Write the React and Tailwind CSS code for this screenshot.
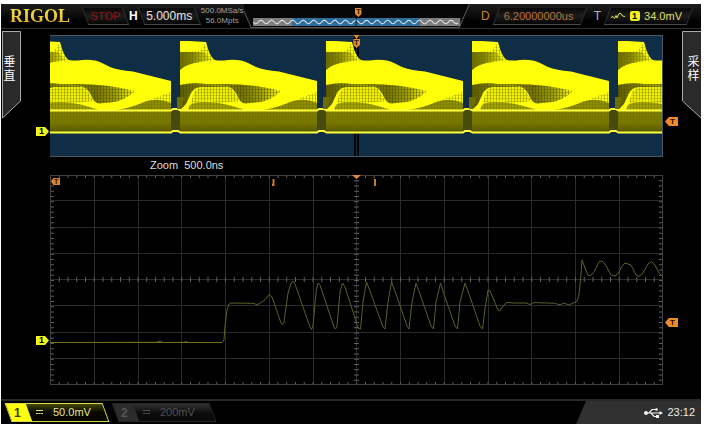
import { useState } from 'react';
import clsx from 'clsx';

const PERIOD = 146;
const bursts = [-16, 130, 276, 422, 568];

const zoomTrace =
  'M0 168.5L106 168.3L110 167L113 168.5L134 168.3L136 167.4L138 168.5H172L174 166L175 152L177 136L179 130L181 129L204 129.3L207 131L211 128.5L215 126L219 120.5L222 123L231 149L232.5 150.5L234 148L238 119L241 109L243 107L245 110L260 153L261.5 155.5L263 152L266 118L268 109L270 111L284 153L285.5 155L287 152L290 118L292.5 109L295 113L303 138L308 154L310.5 155L313 128L316.5 108L320 117L333 153L335 155L338 128L341.5 108L345 117L357 152L359 155L362 128L366 109L370 120L381 152L383.5 155L386 128L390.5 109L394 120L405 152L407.5 155L410 128L415 109L419 120L430 152L432.5 155L435 135L438 116L440 117L448 136L449.5 137L453 132L457 128.5L464 129L476 129L480 130.5L484 128.6L504 129.2L510 130.8L514 129L519 131L522 129.5L527 127.5L529 120L530.5 106L532 86L535 94L538 101L540 102L544 98L549 88L552 87L555 90L561 101L565 102L568 100L572 92L575 89L581 91L586 101L589 102.5L593 99L598 90L601.5 87.5L605 91L609 99L613 103';

const memoryWave = Array.from({ length: 103 }, (_, i) => {
  const x = i * 2;
  const y = 4 + Math.sin((x / 10.5) * Math.PI * 2) * 2;
  return `${i ? 'L' : 'M'}${x} ${y.toFixed(1)}`;
}).join('');

function Chip({ lean = 'right', className, children }) {
  return (
    <div className={clsx('relative flex h-[18px] items-center', className)}>
      <span
        className={clsx(
          'absolute inset-0 border border-x-[#303030] border-t-[#1c1c1c] border-b-[#484848] bg-linear-to-b from-[#080808] via-[#1d1d1d] to-[#060606]',
          lean === 'right' ? 'skew-x-[20deg]' : '-skew-x-[20deg]'
        )}
      />
      {children}
    </div>
  );
}

function TriggerPin() {
  return (
    <span className="block h-[9px] w-[7px] bg-[#e08a35] text-center text-[8px] leading-[8px] font-bold text-[#3a1a00] [clip-path:polygon(0_0,100%_0,100%_65%,50%_100%,0_65%)]">
      T
    </span>
  );
}

function ChannelFlag({ className }) {
  return (
    <span
      className={clsx(
        'block h-[9px] w-[13px] bg-[#f5f51e] pl-[3px] text-[9px] leading-[9px] font-bold text-black [clip-path:polygon(0_0,70%_0,100%_50%,70%_100%,0_100%)]',
        className
      )}
    >
      1
    </span>
  );
}

function LevelFlag({ className }) {
  return (
    <span
      className={clsx(
        'block h-[9px] w-[13px] bg-[#ee8a2c] pl-[5px] text-[8px] leading-[9px] font-bold text-[#2a1000] [clip-path:polygon(30%_0,100%_0,100%_100%,30%_100%,0_50%)]',
        className
      )}
    >
      T
    </span>
  );
}

function SideTab({ side, label }) {
  const left = side === 'left';
  return (
    <button
      type="button"
      className={clsx('relative flex h-[88px] w-[19px] shrink-0 pt-6 text-white', left ? 'pl-px' : 'justify-end pr-px')}
    >
      <svg viewBox="0 0 19 88" className="absolute inset-0 size-full" aria-hidden="true">
        <path
          d={left ? 'M0 .5H18.5V70L.5 87V.5' : 'M19 .5H.5V70L19 87'}
          fill="#2a2a2a"
          stroke="#a8a8a8"
        />
      </svg>
      <span className="relative w-[13px] text-[12px] leading-[14px] break-all">{label}</span>
    </button>
  );
}

function Header() {
  return (
    <header className="flex h-[25px] items-center border-b border-[#2e2e2e] bg-linear-to-b from-[#1d1d1d] via-[#0b0b0b] to-black pr-[11px] pl-[9px] whitespace-nowrap">
      <h1 className="w-[75px] bg-linear-to-b from-[#fff04a] to-[#d8a818] bg-clip-text font-['Liberation_Serif'] text-[18px] leading-6 font-bold text-transparent">
        RIGOL
      </h1>
      <div className="flex items-center gap-[3px]">
        <Chip className="w-[41px] justify-center text-[11px] text-[#8e1515]">
          <span className="relative">STOP</span>
        </Chip>
        <span className="text-[12px] font-bold text-white">H</span>
        <Chip className="w-[57px] justify-center text-[12px] text-[#e4e4e4]">
          <span className="relative">5.000ms</span>
        </Chip>
        <div className="w-[43px] text-center text-[8px] leading-[10px] text-[#a0a0a0]">
          <p>500.0MSa/s</p>
          <p>56.0Mpts</p>
        </div>
      </div>

      {/* Memory depth bar */}
      <div className="relative h-6 flex-1">
        <svg viewBox="0 0 228 24" preserveAspectRatio="none" className="size-full" aria-hidden="true">
          <path d="M-3 0L7 23.500H214L224 0" fill="#060606" stroke="#555" />
          <g transform="translate(9 14)">
            <rect width="206" height="8" fill="#7d7d7d" />
            <rect x="39" width="127" height="8" fill="#2c6f9f" />
            <path d={memoryWave} fill="none" stroke="#e6e6e6" />
            <path d="M102.500 0V8" stroke="#123" />
          </g>
        </svg>
        <span className="absolute top-1 left-1/2 -translate-x-1/2">
          <TriggerPin />
        </span>
      </div>

      <div className="ml-2 flex items-center gap-1.5">
        <span className="text-[12px] text-[#c9803a]">D</span>
        <Chip lean="left" className="w-[88px] pl-2 text-[11px] text-[#b8713a]">
          <span className="relative">6.20000000us</span>
        </Chip>
      </div>
      <div className="ml-2.5 flex items-center gap-1.5">
        <span className="text-[12px] text-[#b4b4b4]">T</span>
        <Chip lean="left" className="w-[83px] justify-between pr-2 pl-1 text-[11px] text-[#dcdc6a]">
          <svg viewBox="0 0 14 8" className="relative h-2 w-3.5" fill="none" stroke="#e0e05c" aria-hidden="true">
            <path d="M0 5.500L2 4.500L3.500 6.500L5 3.500L6 6L8 1.500L10 1.500L11.500 4L14 4.500" />
          </svg>
          <span className="relative h-[10px] w-[10px] rounded-xs bg-[#f0f01c] text-center text-[9px] leading-[10px] font-bold text-black">
            1
          </span>
          <span className="relative">34.0mV</span>
        </Chip>
      </div>
    </header>
  );
}

function Overview() {
  return (
    <div className="relative mt-1 h-[122px] min-w-0 flex-1 bg-[#0f2d44]">
      <svg viewBox="0 0 613 122" preserveAspectRatio="none" className="size-full" aria-hidden="true">
        <defs>
          <pattern id="mesh" width="3" height="3" patternUnits="userSpaceOnUse">
            <path d="M.5 0V3" stroke="#4c4c00" strokeOpacity=".5" />
            <path d="M0 .5H3" stroke="#4c4c00" strokeOpacity=".3" />
          </pattern>
          <pattern id="mesh-light" width="3" height="3" patternUnits="userSpaceOnUse">
            <path d="M.5 0V3" stroke="#6a6a00" strokeOpacity=".4" />
            <path d="M0 .5H3" stroke="#6a6a00" strokeOpacity=".25" />
          </pattern>
          <linearGradient id="shade">
            <stop offset="0" stopColor="#6b6b00" />
            <stop offset=".4" stopColor="#858500" />
            <stop offset="1" stopColor="#e8e800" />
          </linearGradient>
          <linearGradient id="seam">
            <stop offset="0" stopColor="#5c5c00" />
            <stop offset=".5" stopColor="#8a8a00" />
            <stop offset="1" stopColor="#b4b400" />
          </linearGradient>
          <linearGradient id="lens">
            <stop offset="0" stopColor="#8c8c00" />
            <stop offset=".4" stopColor="#747400" />
            <stop offset=".7" stopColor="#a0a000" />
            <stop offset="1" stopColor="#ffff0a" />
          </linearGradient>
          <linearGradient id="band" x2="0" y2="1">
            <stop offset="0" stopColor="#808000" />
            <stop offset=".6" stopColor="#787800" />
            <stop offset="1" stopColor="#525200" />
          </linearGradient>
          <g id="burst">
            <path
              d="M0 6H9L26 7L28 14Q31 23 35 25Q40 26 48 25Q60 24 68 28L76 32Q84 35 99 36.500L113 40L137 46V75H0Z"
              fill="#ffff0a"
            />
            <path d="M0 17H24L31 25L20 27Q6 29 0 35Z" fill="url(#shade)" />
            <path d="M0 17L20 16L25 9L32 24L35 26L20 27Q6 29 0 35Z" fill="url(#mesh-light)" />
            <path d="M0 50Q12 47 26 49H50L46 52H22Q14 52 11 58L6 69L1 74H0Z" fill="url(#seam)" />
            <path d="M0 50Q12 47 26 49H50L46 52H22Q14 52 11 58L6 69L1 74H0Z" fill="url(#mesh)" />
            <path d="M-3 62H4L3 68L0 74H-3Z" fill="#6e6e00" />
            <path d="M14 57Q18 52 26 52H50Q54 56 59 66L40 68Q26 64 11 68Z" fill="#f0f000" />
            <path d="M14 57Q18 52 26 52H50Q54 56 59 66L40 68Q26 64 11 68Z" fill="url(#mesh-light)" />
            <path d="M35 49Q70 48 101 56Q92 65 80 67L65 68.500Q60 68 57 60Q53 52 46 51Z" fill="url(#lens)" />
            <path d="M35 49Q70 48 101 56Q92 65 80 67L65 68.500Q60 68 57 60Q53 52 46 51Z" fill="url(#mesh)" />
            <path d="M10 70Q16 66 30 67Q44 68 62 74L64 75H8Z" fill="#a4a400" />
            <path d="M10 70Q16 66 30 67Q44 68 62 74L64 75H8Z" fill="url(#mesh-light)" />
            <path d="M82 75Q100 72 110 67Q124 62 137 68V75Z" fill="#8e8e00" />
            <path d="M82 75Q100 72 110 67Q124 62 137 68V75Z" fill="url(#mesh-light)" />
            <path d="M116 65Q128 60 137 57V68Q126 62 116 65Z" fill="url(#mesh-light)" />
            <path d="M3 74Q8 70 12 60" fill="none" stroke="#ffff0a" strokeWidth="2" />
            <rect y="75" width="137" height="22" fill="url(#band)" />
            <rect y="75" width="137" height="22" fill="url(#mesh-light)" />
            <rect x="137" y="75" width="9" height="22" fill="#464a0a" />
            <path d="M0 75.500H137L139 74H144L146 75.500" fill="none" stroke="#ffff3c" strokeWidth="2" />
            <path d="M0 97.500H137L139 96H144L146 97.500" fill="none" stroke="#ffff3c" strokeWidth="2" />
          </g>
        </defs>
        {/* Zoomed time window */}
        <path d="M305 0V122M308 0V122" stroke="#050505" strokeWidth="2" />
        {bursts.map(x => (
          <use key={x} href="#burst" x={x} width={PERIOD} />
        ))}
        <path d="M0 .5H613M0 121.500H613M612.500 0V122" stroke="#4c5962" />
      </svg>
      <div className="absolute top-0 left-1/2 flex -translate-x-1/2 flex-col items-center">
        <span className="h-1 w-1.5 bg-[#e08a35] [clip-path:polygon(0_0,100%_0,50%_100%)]" />
        <TriggerPin />
      </div>
    </div>
  );
}

function ZoomPlot() {
  return (
    <div className="relative h-[212px] min-w-0 flex-1">
      <svg viewBox="0 0 613 212" preserveAspectRatio="none" className="size-full" fill="none" aria-hidden="true">
        <g stroke="#2b2b2b" shapeRendering="crispEdges">
          {Array.from({ length: 13 }, (_, i) => (
            <path key={i} d={`M${Math.round((i + 1) * 43.75)}.5 1V211`} />
          ))}
          {Array.from({ length: 7 }, (_, i) => (
            <path key={i} d={`M0 ${Math.round((i + 1) * 26.25)}.5H613`} />
          ))}
        </g>
        <g stroke="#606060">
          <path d="M0 2.500H613" strokeWidth="3" strokeDasharray="1 7.750" />
          <path d="M0 209.500H613" strokeWidth="3" strokeDasharray="1 7.750" />
          <path d="M0 105.500H613" strokeWidth="5" strokeDasharray="1 7.750" />
          <path d="M2 1V211" strokeWidth="4" strokeDasharray="1 4.250" />
          <path d="M306.500 1V211" strokeWidth="5" strokeDasharray="1 4.250" />
          <path d="M611 1V211" strokeWidth="4" strokeDasharray="1 4.250" />
        </g>
        <rect x=".5" y="1.500" width="612" height="209" stroke="#404040" />
        <path d={zoomTrace} stroke="#5e5e2c" strokeLinejoin="round" />
        <path d="M0 168.500H172" stroke="#70701a" />
        <path d="M302 1H311L306.500 5Z" fill="#e08a35" />
        <path d="M223.500 5V11H222M325 5V11H324" stroke="#c97830" strokeWidth="2" />
      </svg>
      <span className="absolute top-1 left-px h-[7px] w-[9px] bg-[#dd8030] pl-[3px] text-[7px] leading-[7px] font-bold text-[#2a1000] [clip-path:polygon(25%_0,100%_0,100%_100%,25%_100%,0_50%)]">
        T
      </span>
    </div>
  );
}

function Channel({ id, scale, active, onClick }) {
  return (
    <button
      type="button"
      aria-pressed={active}
      onClick={onClick}
      className={clsx('relative flex h-[19px] w-[98px] items-center text-[11px]', active ? 'text-[#e6e690]' : 'text-[#505050]')}
    >
      <span
        className={clsx(
          'absolute inset-0 skew-x-[20deg] border bg-linear-to-b',
          active ? 'border-[#d8d848] from-[#484808] to-[#080800] to-50%' : 'border-[#262626] from-[#303030] to-[#0a0a0a] to-60%'
        )}
      >
        <span className={clsx('block h-full w-5', active ? 'bg-[#ffff10]' : 'bg-[#2c2c2c]')} />
      </span>
      <span className={clsx('relative w-7 pl-1.5 text-left text-[12px] font-bold', active ? 'text-[#3c3c00]' : 'text-[#555]')}>
        {id}
      </span>
      <svg viewBox="0 0 7 5" className="relative h-[5px] w-[7px]" stroke="currentColor" aria-hidden="true">
        <path d="M0 .5H7" />
        <path d="M0 3.500H7" strokeDasharray="2 .5" />
      </svg>
      <span className="relative ml-2.5">{scale}</span>
    </button>
  );
}

function Footer() {
  const [channels, setChannels] = useState({ 1: true, 2: false });
  const toggle = id => setChannels(c => ({ ...c, [id]: !c[id] }));

  return (
    <footer className="flex h-[25px] items-stretch justify-between border-t-2 border-[#2a2a2a]">
      <div className="flex items-center gap-[9px] pl-[7px]">
        <Channel id="1" scale="50.0mV" active={channels[1]} onClick={() => toggle(1)} />
        <Channel id="2" scale="200mV" active={channels[2]} onClick={() => toggle(2)} />
      </div>
      <div className="flex w-[125px] items-center justify-end gap-1 bg-[#303030] pr-1.5 text-[11px] text-[#ececec] [clip-path:polygon(10px_0,100%_0,100%_100%,0_100%)]">
        <svg viewBox="0 0 19 10" className="h-2.5 w-[19px]" fill="none" stroke="#f2f2f2" aria-label="USB">
          <path d="M2 5H16M5 5L8 1.500H12M7 5L10 8.500H13" strokeWidth="1.200" />
          <circle cx="2" cy="5" r="2" fill="#f2f2f2" stroke="none" />
          <path d="M15.500 3L19 5L15.500 7Z" fill="#f2f2f2" stroke="none" />
          <circle cx="12.500" cy="1.500" r="1.300" fill="#f2f2f2" stroke="none" />
          <rect x="12" y="7" width="3" height="3" fill="#f2f2f2" stroke="none" />
        </svg>
        <time>23:12</time>
      </div>
    </footer>
  );
}

export default function App() {
  return (
    <div className="min-h-screen bg-white pt-1 pr-[5px] pb-[3px] pl-px font-['Liberation_Sans','Noto_Sans_CJK_SC',sans-serif]">
      <div className="bg-black">
        <Header />
        <main className="pt-0.5 pb-[13px]">
          <section className="flex">
            <div className="flex w-[49px] shrink-0 justify-between pr-px pl-px">
              <SideTab side="left" label="垂直" />
              <ChannelFlag className="mt-24" />
            </div>
            <Overview />
            <div className="flex w-[38px] shrink-0 justify-between pl-0.5">
              <LevelFlag className="mt-[86px]" />
              <SideTab side="right" label="采样" />
            </div>
          </section>

          <p className="pl-[149px] text-[11px] leading-[17px] whitespace-pre text-[#dedede]">Zoom  500.0ns</p>

          <section className="flex">
            <div className="flex w-[49px] shrink-0 justify-end pr-px">
              <ChannelFlag className="mt-[162px]" />
            </div>
            <ZoomPlot />
            <div className="w-[38px] shrink-0 pl-0.5">
              <LevelFlag className="mt-36" />
            </div>
          </section>
        </main>
        <Footer />
      </div>
    </div>
  );
}
